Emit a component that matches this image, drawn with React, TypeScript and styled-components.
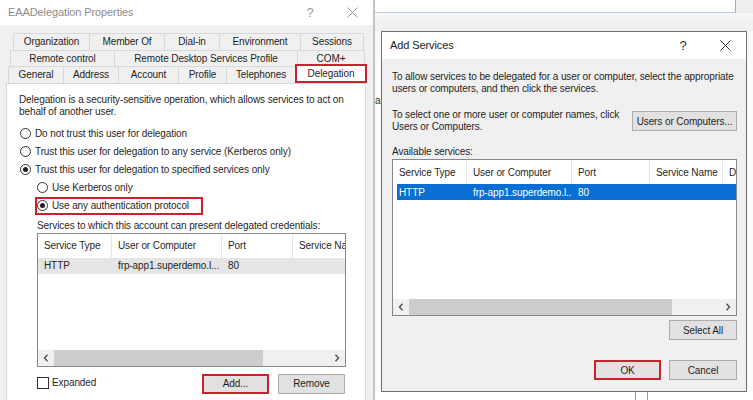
import React from 'react';
import styled, { createGlobalStyle } from 'styled-components';

const GlobalStyle = createGlobalStyle`
  * {
    box-sizing: border-box;
  }

  html,
  body {
    margin: 0;
    padding: 0;
    width: 753px;
    height: 400px;
    overflow: hidden;
    background: #ffffff;
  }

  body {
    font-family: "Liberation Sans", Arial, sans-serif;
    font-size: 10px;
    letter-spacing: -0.1px;
    color: #1f1f1f;
  }
`;

interface Column {
  label: string;
  width: number;
}

const Desktop = styled.div`
  display: flex;
  width: 753px;
  height: 400px;
  overflow: hidden;
`;

/* ---------- window chrome ---------- */

const PropsWindow = styled.div`
  width: 375px;
  flex: none;
  display: flex;
  flex-direction: column;
  background: #f0f0f0;
  border-right: 2px solid #c4c4c4;
`;

const TitleBar = styled.div<{ $h: number }>`
  height: ${p => p.$h}px;
  flex: none;
  display: flex;
  align-items: center;
  background: #ffffff;
`;

const TitleText = styled.div<{ $inactive?: boolean }>`
  flex: 1;
  padding-left: 8px;
  padding-bottom: 2px;
  font-size: 11px;
  color: ${p => (p.$inactive ? '#8c8c8c' : '#1a1a1a')};
  white-space: nowrap;
`;

const CaptionButton = styled.div<{ $inactive?: boolean }>`
  width: 42px;
  height: 100%;
  flex: none;
  display: flex;
  align-items: center;
  justify-content: center;
  font-size: 13px;
  color: ${p => (p.$inactive ? '#9a9a9a' : '#333333')};
`;

const CloseGlyph: React.FC<{ color: string }> = ({ color }) => (
  <svg width="11" height="11" viewBox="0 0 11 11">
    <path d="M0.5 0.5 L10.5 10.5 M10.5 0.5 L0.5 10.5" stroke={color} strokeWidth="1" fill="none" />
  </svg>
);

/* ---------- tabs ---------- */

const WindowBody = styled.div`
  flex: 1;
  display: flex;
  flex-direction: column;
  padding: 8px 7px 0 6px;
  min-height: 0;
`;

const TabRow = styled.div<{ $l: number }>`
  height: 16.5px;
  flex: none;
  display: flex;
  padding-left: ${p => p.$l}px;
`;

const Tab = styled.div<{ $w: number; $sel?: boolean }>`
  width: ${p => p.$w + 1}px;
  flex: none;
  margin-right: -1px;
  display: flex;
  align-items: center;
  justify-content: center;
  white-space: nowrap;
  color: #1f1f1f;
  background: ${p => (p.$sel ? '#ffffff' : '#f0f0f0')};
  border: 1px solid #d9d9d9;
  border-bottom: none;
  ${p =>
    p.$sel &&
    `
    position: relative;
    z-index: 1;
    margin-top: -2px;
    height: 18.5px;
    border: 2px solid #c8232c;
  `}
`;

const TabPage = styled.div`
  flex: 1;
  background: #ffffff;
  border: 1px solid #d9d9d9;
  border-bottom: none;
  padding: 10px 0 0 12px;
`;

const Para = styled.p`
  margin: 0;
  line-height: 12px;
  white-space: nowrap;
`;

const OptionList = styled.div`
  margin-top: 7px;
  display: flex;
  flex-direction: column;
`;

const OptionRow = styled.div<{ $indent?: boolean; $mark?: boolean }>`
  height: 18px;
  display: flex;
  align-items: center;
  gap: 4px;
  white-space: nowrap;
  padding-left: ${p => (p.$indent ? 18 : 1)}px;
  ${p =>
    p.$mark &&
    `
    width: 168px;
    margin-left: 16px;
    padding-left: 0;
    border: 2px solid #c8232c;
  `}
`;

const Radio = styled.span<{ $on?: boolean }>`
  width: 11px;
  height: 11px;
  flex: none;
  border-radius: 50%;
  border: 1px solid #333333;
  background: #ffffff;
  display: flex;
  align-items: center;
  justify-content: center;

  &::after {
    content: '';
    width: 5px;
    height: 5px;
    border-radius: 50%;
    background: ${p => (p.$on ? '#1f1f1f' : 'transparent')};
  }
`;

const SubLabel = styled.div`
  margin-top: 5px;
  padding-left: 18px;
  line-height: 12px;
  white-space: nowrap;
`;

const ListWrap = styled.div`
  margin-top: 1px;
  padding-left: 18px;
`;

const FooterRow = styled.div`
  margin-top: 7px;
  padding: 0 20px 0 18px;
  display: flex;
  align-items: flex-start;
`;

const CheckLabel = styled.div`
  display: flex;
  align-items: center;
  gap: 3px;
  margin-top: 3px;
  flex: 1;
`;

const CheckBox = styled.span`
  width: 12px;
  height: 12px;
  flex: none;
  border: 1px solid #333333;
  background: #ffffff;
`;

const WinButton = styled.div<{ $w: number; $mark?: boolean }>`
  width: ${p => p.$w}px;
  height: 20px;
  flex: none;
  display: flex;
  align-items: center;
  justify-content: center;
  color: #1f1f1f;
  background: #e1e1e1;
  border: ${p => (p.$mark ? '2px solid #c8232c' : '1px solid #adadad')};
`;

const ButtonGroup = styled.div<{ $gap: number }>`
  display: flex;
  gap: ${p => p.$gap}px;
`;

/* ---------- list view ---------- */

const ListBox = styled.div<{ $w: number; $h: number }>`
  width: ${p => p.$w}px;
  height: ${p => p.$h}px;
  border: 1px solid #828790;
  background: #ffffff;
  display: flex;
  flex-direction: column;
  overflow: hidden;
`;

const ListHeader = styled.div`
  height: 24px;
  flex: none;
  display: flex;
`;

const HeaderCell = styled.div<{ $w: number }>`
  width: ${p => p.$w}px;
  flex: none;
  display: flex;
  align-items: center;
  padding-left: 6px;
  border-right: 1px solid #e5e5e5;
  white-space: nowrap;
  overflow: hidden;
`;

const ListBody = styled.div`
  flex: 1;
`;

const ListRow = styled.div<{ $bg: string; $fg: string; $inset: number }>`
  height: 16px;
  display: flex;
  align-items: center;
  color: ${p => p.$fg};
  background: linear-gradient(to right, transparent ${p => p.$inset}px, ${p => p.$bg} ${p => p.$inset}px);
`;

const RowCell = styled.div<{ $w: number }>`
  width: ${p => p.$w}px;
  flex: none;
  padding-left: 6px;
  white-space: nowrap;
  overflow: hidden;
`;

const HScroll = styled.div`
  height: 16px;
  flex: none;
  display: flex;
  background: #f0f0f0;
`;

const ScrollArrow = styled.div`
  width: 16px;
  flex: none;
  display: flex;
  align-items: center;
  justify-content: center;
`;

const ScrollTrack = styled.div`
  flex: 1;
  display: flex;
`;

const ScrollThumb = styled.div<{ $w: number }>`
  width: ${p => p.$w}px;
  background: #cdcdcd;
`;

const Chevron: React.FC<{ dir: 'left' | 'right' }> = ({ dir }) => (
  <svg width="6" height="8" viewBox="0 0 6 8">
    <path
      d={dir === 'left' ? 'M4.5 0.8 L1.5 4 L4.5 7.2' : 'M1.5 0.8 L4.5 4 L1.5 7.2'}
      stroke="#505050"
      strokeWidth="1.4"
      fill="none"
    />
  </svg>
);

interface ListViewProps {
  width: number;
  height: number;
  columns: Column[];
  row: string[];
  rowBg: string;
  rowFg: string;
  rowInset: number;
  thumb: number;
}

const ListView: React.FC<ListViewProps> = ({ width, height, columns, row, rowBg, rowFg, rowInset, thumb }) => (
  <ListBox $w={width} $h={height}>
    <ListHeader>
      {columns.map(c => (
        <HeaderCell key={c.label} $w={c.width}>
          {c.label}
        </HeaderCell>
      ))}
    </ListHeader>
    <ListBody>
      <ListRow $bg={rowBg} $fg={rowFg} $inset={rowInset}>
        {columns.map((c, i) => (
          <RowCell key={c.label} $w={c.width}>
            {row[i] || ''}
          </RowCell>
        ))}
      </ListRow>
    </ListBody>
    <HScroll>
      <ScrollArrow>
        <Chevron dir="left" />
      </ScrollArrow>
      <ScrollTrack>
        <ScrollThumb $w={thumb} />
      </ScrollTrack>
      <ScrollArrow>
        <Chevron dir="right" />
      </ScrollArrow>
    </HScroll>
  </ListBox>
);

/* ---------- background + add services dialog ---------- */

const BackArea = styled.div`
  flex: 1;
  display: flex;
  flex-direction: column;
  background: #f8f8f8;
`;

const BackStrip = styled.div`
  height: 13px;
  flex: none;
  display: flex;
  background: #eeeeee;
`;

const BackField = styled.div`
  width: 361px;
  height: 13px;
  background: #ffffff;
  border-bottom: 1px solid #bccbdc;
  border-right: 1px solid #a8a8a8;
`;

const BackGap = styled.div`
  height: 18px;
  flex: none;
  background: linear-gradient(#f7f7f7, #efefef);
`;

const DialogRow = styled.div`
  height: 361px;
  flex: none;
  display: flex;
`;

const Sliver = styled.div<{ $w: number }>`
  width: ${p => p.$w}px;
  flex: none;
  overflow: hidden;
  background: #fbfbfb;
  padding-top: 64px;
  color: #333333;
  white-space: nowrap;
  line-height: 12px;
`;

const AddDialog = styled.div`
  width: 366px;
  flex: none;
  display: flex;
  flex-direction: column;
  background: #f0f0f0;
  border: 1px solid #6f6f6f;
`;

const DialogBody = styled.div`
  flex: 1;
  padding: 12px 9px 0 10px;
  display: flex;
  flex-direction: column;
`;

const PickRow = styled.div`
  margin-top: 14px;
  height: 24px;
  display: flex;
  align-items: center;
  justify-content: space-between;
`;

const FieldLabel = styled.div`
  margin-top: 13px;
  line-height: 12px;
`;

const DialogList = styled.div`
  margin-top: 1px;
`;

const RightButtons = styled.div<{ $top: number }>`
  margin-top: ${p => p.$top}px;
  display: flex;
  justify-content: flex-end;
  gap: 8px;
`;

const BackBottom = styled.div`
  flex: 1;
  display: flex;
  gap: 11px;
  padding-left: 260px;
  background: #ffffff;
`;

const BehindEdge = styled.div`
  width: 1px;
  background: #9c9c9c;
`;

const propsColumns: Column[] = [
  { label: 'Service Type', width: 74 },
  { label: 'User or Computer', width: 110 },
  { label: 'Port', width: 71 },
  { label: 'Service Name', width: 80 },
];

const dialogColumns: Column[] = [
  { label: 'Service Type', width: 74 },
  { label: 'User or Computer', width: 105 },
  { label: 'Port', width: 78 },
  { label: 'Service Name', width: 73 },
  { label: 'Domain', width: 60 },
];

const serviceRow = ['HTTP', 'frp-app1.superdemo.l...', '80'];

const tabRows = [
  {
    left: 7,
    tabs: [
      { label: 'Organization', w: 76 },
      { label: 'Member Of', w: 75 },
      { label: 'Dial-in', w: 55 },
      { label: 'Environment', w: 81 },
      { label: 'Sessions', w: 63 },
    ],
  },
  {
    left: 4,
    tabs: [
      { label: 'Remote control', w: 104 },
      { label: 'Remote Desktop Services Profile', w: 183 },
      { label: 'COM+', w: 67 },
    ],
  },
  {
    left: 2,
    tabs: [
      { label: 'General', w: 55 },
      { label: 'Address', w: 55 },
      { label: 'Account', w: 60 },
      { label: 'Profile', w: 48 },
      { label: 'Telephones', w: 69 },
      { label: 'Delegation', w: 71, sel: true },
    ],
  },
];

export default function App() {
  return (
    <>
      <GlobalStyle />
      <Desktop>
        <PropsWindow>
          <TitleBar $h={25}>
            <TitleText $inactive>EAADelegation Properties</TitleText>
            <CaptionButton $inactive>?</CaptionButton>
            <CaptionButton $inactive>
              <CloseGlyph color="#9a9a9a" />
            </CaptionButton>
          </TitleBar>
          <WindowBody>
            {tabRows.map((r, i) => (
              <TabRow key={i} $l={r.left}>
                {r.tabs.map(t => (
                  <Tab key={t.label} $w={t.w} $sel={'sel' in t && t.sel}>
                    {t.label}
                  </Tab>
                ))}
              </TabRow>
            ))}
            <TabPage>
              <Para>
                Delegation is a security-sensitive operation, which allows services to act on
                <br />
                behalf of another user.
              </Para>
              <OptionList>
                <OptionRow>
                  <Radio />
                  Do not trust this user for delegation
                </OptionRow>
                <OptionRow>
                  <Radio />
                  Trust this user for delegation to any service (Kerberos only)
                </OptionRow>
                <OptionRow>
                  <Radio $on />
                  Trust this user for delegation to specified services only
                </OptionRow>
                <OptionRow $indent>
                  <Radio />
                  Use Kerberos only
                </OptionRow>
                <OptionRow $indent $mark>
                  <Radio $on />
                  Use any authentication protocol
                </OptionRow>
              </OptionList>
              <SubLabel>Services to which this account can present delegated credentials:</SubLabel>
              <ListWrap>
                <ListView
                  width={309}
                  height={134}
                  columns={propsColumns}
                  row={serviceRow}
                  rowBg="#e5e5e5"
                  rowFg="#1f1f1f"
                  rowInset={0}
                  thumb={209}
                />
              </ListWrap>
              <FooterRow>
                <CheckLabel>
                  <CheckBox />
                  Expanded
                </CheckLabel>
                <ButtonGroup $gap={9}>
                  <WinButton $w={67} $mark>
                    Add...
                  </WinButton>
                  <WinButton $w={67}>Remove</WinButton>
                </ButtonGroup>
              </FooterRow>
            </TabPage>
          </WindowBody>
        </PropsWindow>

        <BackArea>
          <BackStrip>
            <BackField />
          </BackStrip>
          <BackGap />
          <DialogRow>
            <Sliver $w={6}>ai</Sliver>
            <AddDialog>
              <TitleBar $h={27}>
                <TitleText>Add Services</TitleText>
                <CaptionButton>?</CaptionButton>
                <CaptionButton>
                  <CloseGlyph color="#333333" />
                </CaptionButton>
              </TitleBar>
              <DialogBody>
                <Para>
                  To allow services to be delegated for a user or computer, select the appropriate
                  <br />
                  users or computers, and then click the services.
                </Para>
                <PickRow>
                  <Para>
                    To select one or more user or computer names, click
                    <br />
                    Users or Computers.
                  </Para>
                  <WinButton $w={105}>Users or Computers...</WinButton>
                </PickRow>
                <FieldLabel>Available services:</FieldLabel>
                <DialogList>
                  <ListView
                    width={345}
                    height={157}
                    columns={dialogColumns}
                    row={serviceRow}
                    rowBg="#0a6fd4"
                    rowFg="#ffffff"
                    rowInset={4}
                    thumb={263}
                  />
                </DialogList>
                <RightButtons $top={4}>
                  <WinButton $w={68}>Select All</WinButton>
                </RightButtons>
                <RightButtons $top={20}>
                  <WinButton $w={67} $mark>
                    OK
                  </WinButton>
                  <WinButton $w={68}>Cancel</WinButton>
                </RightButtons>
              </DialogBody>
            </AddDialog>
            <Sliver $w={6} />
          </DialogRow>
          <BackBottom>
            <BehindEdge />
            <BehindEdge />
          </BackBottom>
        </BackArea>
      </Desktop>
    </>
  );
}
